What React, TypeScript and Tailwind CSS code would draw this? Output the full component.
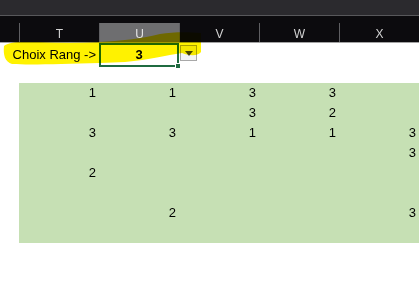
import React from 'react';

const cols = ['T', 'U', 'V', 'W', 'X'];

// values for the green block, one array per row (T..X)
const rows: string[][] = [
  ['1', '1', '3', '3', ''],
  ['', '', '3', '2', ''],
  ['3', '3', '1', '1', '3'],
  ['', '', '', '', '3'],
  ['2', '', '', '', ''],
  ['', '', '', '', ''],
  ['', '2', '', '', '3'],
  ['', '', '', '', ''],
];

const grid = 'grid grid-cols-[19px_repeat(5,80px)]';

export default function App() {
  return (
    <div className="relative w-[419px] h-[302px] overflow-hidden bg-white font-['Liberation_Sans',Arial,sans-serif]">
      {/* ribbon strip */}
      <div className="h-[16px] bg-[#2b2a2e] border-b border-[#58585b]" />

      {/* column headers */}
      <div className={`${grid} h-[27px] bg-[#0c0b0e] border-b border-[#a3a3a3] items-end`}>
        <div className="h-[19px]" />
        {cols.map((c) => (
          <div
            key={c}
            className={`h-[19px] border-l border-[#5f5f62] flex items-end justify-center pb-[1px] text-[12px] leading-[14px] ${
              c === 'U' ? 'bg-[#6e6e70] text-[#e4e4e4]' : 'text-[#d2d2d2]'
            }`}
          >
            {c}
          </div>
        ))}
      </div>

      {/* Choix row */}
      <div className={`${grid} h-[20px] text-[13px] text-black`}>
        <div />
        <div className="flex items-center justify-end pr-[3px] whitespace-nowrap">Choix Rang -&gt;</div>
        <div className="relative border-2 border-[#1f6b40] flex items-center justify-center font-bold">
          3
          <div className="absolute -right-[4px] -bottom-[4px] w-[6px] h-[6px] bg-[#1f6b40] border border-white" />
        </div>
        <div className="relative">
          <div className="absolute left-[1px] top-[2px] w-[17px] h-[16px] border border-[#a8a8a8] bg-[#f4f4f4] flex items-center justify-center">
            <div className="w-0 h-0 border-l-[4px] border-r-[4px] border-t-[5px] border-l-transparent border-r-transparent border-t-[#444]" />
          </div>
        </div>
        <div />
        <div />
      </div>

      {/* empty row */}
      <div className="h-[20px]" />

      {/* green block */}
      <div className={`${grid} text-[13px] text-black`}>
        {rows.map((r, i) => (
          <React.Fragment key={i}>
            <div className="h-[20px]" />
            {r.map((v, j) => (
              <div key={j} className="h-[20px] bg-[#c6e0b4] flex items-center justify-end pr-[3px]">
                {v}
              </div>
            ))}
          </React.Fragment>
        ))}
      </div>

      {/* highlighter stroke */}
      <svg
        className="absolute inset-0 pointer-events-none mix-blend-multiply"
        width="419"
        height="302"
        viewBox="0 0 419 302"
      >
        <path
          d="M4 46 C8 42 20 41 40 42 C60 43 80 43 99 42 C120 41 140 39 160 34 C172 32 188 32 201 33 L201 52 C199 55 192 57 182 53 C166 55 150 60 125 62 L100 63 C60 64 30 65 12 64 C5 62 3 55 4 46 Z"
          fill="#fff200"
        />
      </svg>
    </div>
  );
}
